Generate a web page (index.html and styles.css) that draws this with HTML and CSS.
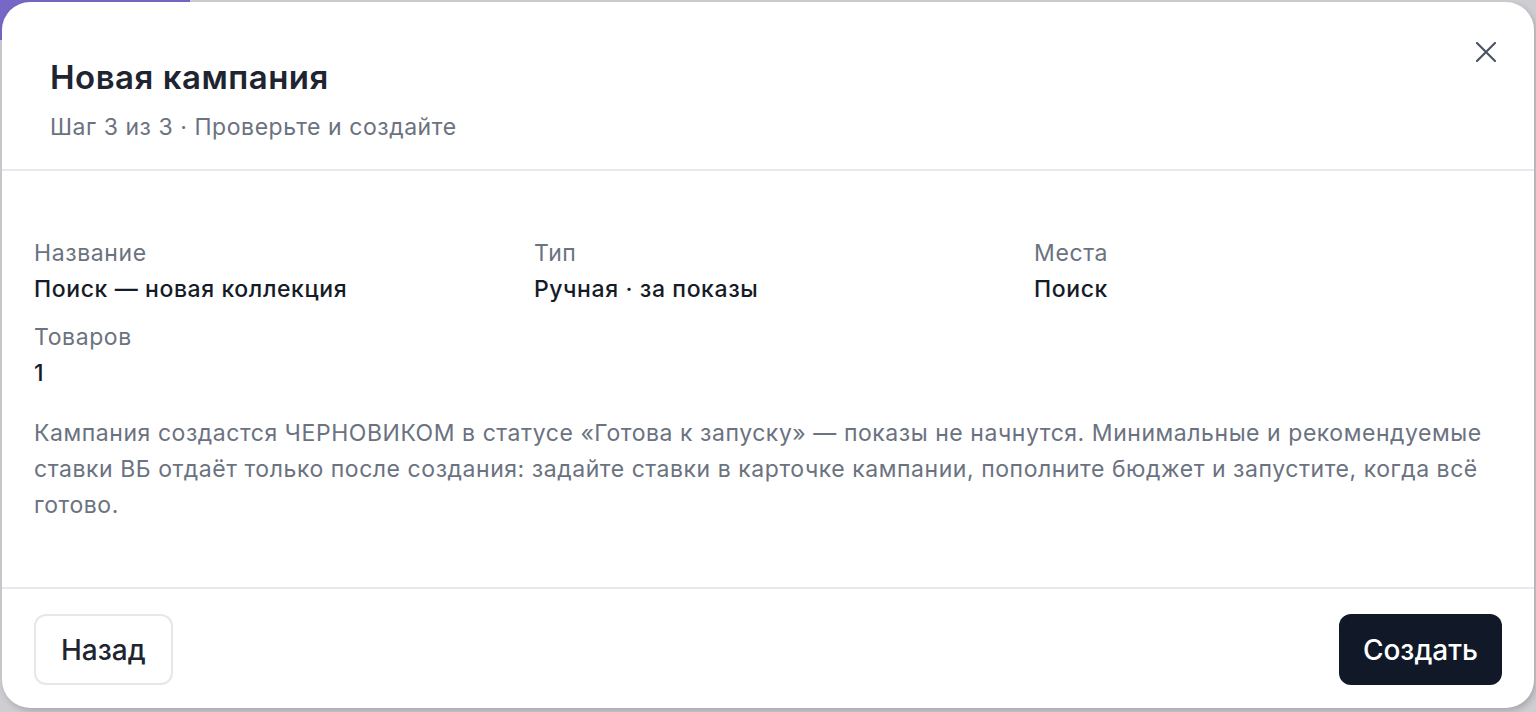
FILE: index.html
```html
<!DOCTYPE html>
<html lang="ru">
<head>
    <meta charset="UTF-8">
    <meta name="viewport" content="width=device-width, initial-scale=1.0">
    <title>Новая кампания</title>
    <link rel="stylesheet" href="styles.css">
</head>
<body>
    <div class="page-accent"></div>

    <div class="modal">
        <button class="modal-close" aria-label="Закрыть">
            <svg width="22" height="22" viewBox="0 0 22 22" fill="none" stroke="currentColor" stroke-width="2.2" stroke-linecap="round">
                <path d="M2 2L20 20M20 2L2 20"/>
            </svg>
        </button>

        <header class="modal-header">
            <h2>Новая кампания</h2>
            <p class="step">Шаг 3 из 3 · Проверьте и создайте</p>
        </header>

        <div class="modal-body">
            <div class="summary">
                <div class="field">
                    <span class="label">Название</span>
                    <span class="value">Поиск — новая коллекция</span>
                </div>
                <div class="field">
                    <span class="label">Тип</span>
                    <span class="value">Ручная · за показы</span>
                </div>
                <div class="field">
                    <span class="label">Места</span>
                    <span class="value">Поиск</span>
                </div>
                <div class="field">
                    <span class="label">Товаров</span>
                    <span class="value">1</span>
                </div>
            </div>
            <p class="note">Кампания создастся ЧЕРНОВИКОМ в статусе «Готова к запуску» — показы не начнутся. Минимальные и рекомендуемые ставки ВБ отдаёт только после создания: задайте ставки в карточке кампании, пополните бюджет и запустите, когда всё готово.</p>
        </div>

        <footer class="modal-footer">
            <button class="btn btn-secondary">Назад</button>
            <button class="btn btn-primary">Создать</button>
        </footer>
    </div>
</body>
</html>
```

FILE: styles.css
```css
body {
    font-family: Inter, 'Noto Sans', sans-serif;
    margin: 0;
    padding: 2px;
    height: 712px;
    box-sizing: border-box;
    background-color: #cdcdd2;
    color: #111827;
    overflow: hidden;
    position: relative;
}
.page-accent {
    position: absolute;
    top: 0;
    left: 0;
    width: 190px;
    height: 40px;
    background-color: #7767c6;
}
.modal {
    position: relative;
    height: 706px;
    box-sizing: border-box;
    background-color: #fff;
    border-radius: 28px;
    box-shadow: 2px 3px 6px rgba(0, 0, 0, 0.18);
    display: flex;
    flex-direction: column;
}
.modal-close {
    position: absolute;
    top: 39px;
    right: 37px;
    padding: 0;
    border: none;
    background: none;
    color: #4b5563;
    cursor: pointer;
    line-height: 0;
}
.modal-header {
    padding: 55px 48px 26px;
    border-bottom: 2px solid #e8e9ec;
}
.modal-header h2 {
    margin: 0;
    font-size: 33px;
    line-height: 40px;
    font-weight: 600;
    color: #1e2531;
    letter-spacing: 0.5px;
}
.step {
    margin: 14px 0 0;
    font-size: 23px;
    line-height: 32px;
    color: #6b7280;
    letter-spacing: 0.55px;
}
.modal-body {
    flex: 1;
    padding: 66px 32px 0;
}
.summary {
    display: grid;
    grid-template-columns: repeat(3, 1fr);
    column-gap: 32px;
    row-gap: 16px;
}
.field {
    display: flex;
    flex-direction: column;
    gap: 4px;
}
.label {
    font-size: 23px;
    line-height: 32px;
    color: #6b7280;
    letter-spacing: 0.6px;
}
.value {
    font-size: 23px;
    line-height: 32px;
    font-weight: 500;
    color: #151b28;
    letter-spacing: 0.6px;
}
.note {
    margin: 26px 0 0;
    font-size: 23px;
    line-height: 36px;
    color: #6b7280;
    letter-spacing: 0.55px;
}
.modal-footer {
    display: flex;
    justify-content: space-between;
    padding: 25px 32px 23px;
    border-top: 2px solid #e8e9ec;
}
.btn {
    height: 71px;
    padding: 0 25px;
    border-radius: 12px;
    font-family: inherit;
    font-size: 28px;
    font-weight: 500;
    cursor: pointer;
}
.btn-secondary {
    background-color: #fff;
    color: #1e2531;
    border: 2px solid #e5e7eb;
}
.btn-primary {
    padding: 0 24px;
    background-color: #111827;
    color: #fff;
    border: none;
}
```
